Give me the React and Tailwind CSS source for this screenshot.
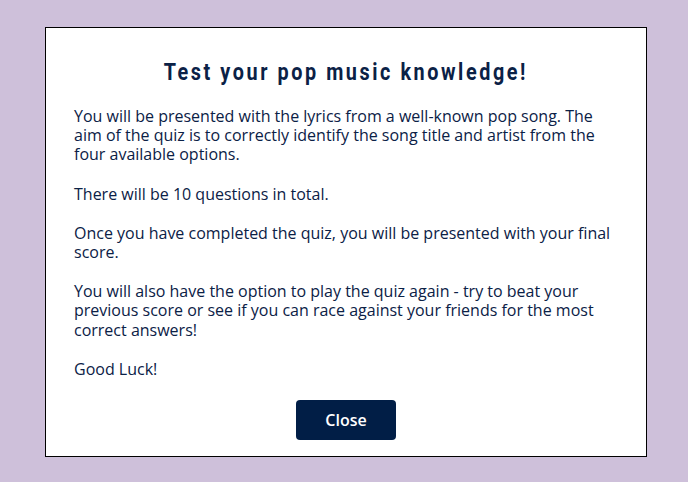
export default function App() {
  const body = "font-['Open_Sans',sans-serif] text-[16px] leading-[19.2px] text-[#0b2146]";
  return (
    <div className="min-h-[482px] w-full bg-[#cec0da] pt-[27px] pl-[45px]">
      <div className="w-[602px] h-[430px] border border-black bg-white px-[28px] pt-[32px] flex flex-col">
        <div className="flex justify-center">
          <h1 className="inline-block scale-x-[0.86] font-['Roboto',sans-serif] font-bold text-[23px] leading-[26px] tracking-[3px] whitespace-nowrap text-[#0b2146]">
            Test your pop music knowledge!
          </h1>
        </div>
        <div className={`${body} mt-[21px] flex flex-col gap-[20px]`}>
          <p>
            You will be presented with the lyrics from a well-known pop song. The aim of the quiz is to correctly identify the song title and artist from the four available options.
          </p>
          <p>There will be 10 questions in total.</p>
          <p>Once you have completed the quiz, you will be presented with your final score.</p>
          <p>
            You will also have the option to play the quiz again - try to beat your previous score or see if you can race against your friends for the most correct answers!
          </p>
          <p>Good Luck!</p>
        </div>
        <div className="flex justify-center mt-[21px]">
          <button className="w-[100px] h-[40px] rounded-[4px] bg-[#011e46] text-white font-['Open_Sans',sans-serif] font-semibold text-[16px]">
            Close
          </button>
        </div>
      </div>
    </div>
  );
}
